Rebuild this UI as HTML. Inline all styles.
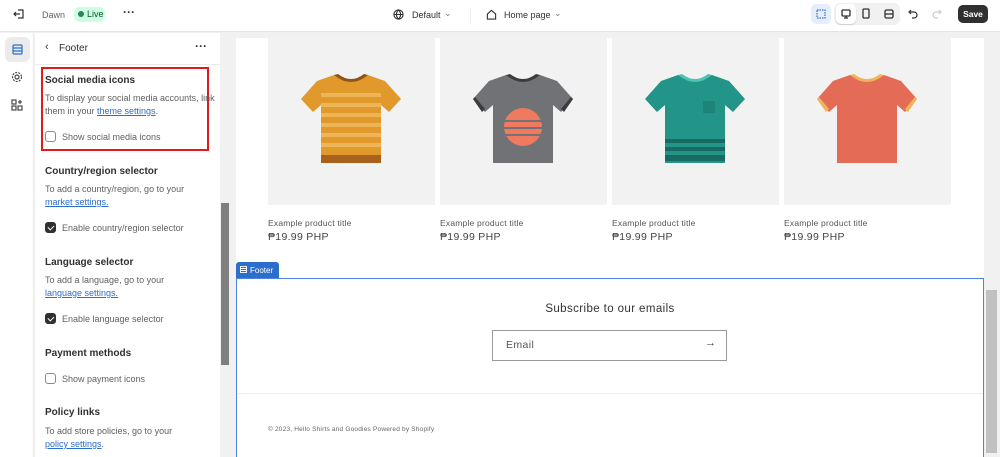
<!DOCTYPE html>
<html><head><meta charset="utf-8"><style>
*{margin:0;padding:0;box-sizing:border-box}
body{width:1000px;height:457px;overflow:hidden;font-family:"Liberation Sans",sans-serif;background:#f1f1f1;position:relative;color:#303030}
.a{position:absolute}
.t{font-size:9px;color:#616161;line-height:13px}
.h{font-size:10px;color:#303030;font-weight:bold;font-weight:600}
a{color:#2c6ecb;text-decoration:underline}
.cb{position:absolute;width:11px;height:11px;border:1px solid #8a8a8a;border-radius:3px;background:#fff}
.cb.on{background:#303030;border-color:#303030}
.cb.on::after{content:"";position:absolute;left:3px;top:1px;width:3px;height:5px;border:solid #fff;border-width:0 1.3px 1.3px 0;transform:rotate(45deg)}
.card{position:absolute;top:38px;width:167px;height:167px;background:#f2f2f2}
.ptl{position:absolute;top:218px;font-size:8.5px;color:#555;letter-spacing:.2px}
.pr{position:absolute;top:231px;font-size:10.5px;color:#444;letter-spacing:.3px}
</style></head><body>
<!-- top bar -->
<div class="a" style="left:0;top:0;width:1000px;height:32px;background:#fff;border-bottom:1px solid #e3e3e3"></div>
<svg class="a" style="left:13px;top:8px" width="12" height="12" viewBox="0 0 12 12" fill="none" stroke="#303030" stroke-width="1.2"><path d="M5 2h5v8H5M1 6h6M3 4L1 6l2 2"/></svg>
<div class="a t" style="left:42px;top:9px;font-size:9px">Dawn</div>
<div class="a" style="left:74px;top:7px;width:31px;height:15px;background:#cdfee1;border-radius:6px;font-size:9px;color:#0c5132;padding:2px 0 0 13px">Live</div>
<div class="a" style="left:78px;top:11px;width:6px;height:6px;border-radius:3px;background:#29845a"></div>
<div class="a" style="left:123px;top:5px;font-size:12px;font-weight:bold">···</div>
<svg class="a" style="left:393px;top:9px" width="11" height="11" viewBox="0 0 12 12" fill="none" stroke="#303030" stroke-width="1.2"><circle cx="6" cy="6" r="5"/><path d="M1 6h10M6 1c-3 3-3 7 0 10M6 1c3 3 3 7 0 10"/></svg>
<div class="a" style="left:412px;top:10px;font-size:9px">Default</div>
<div class="a" style="left:444px;top:8px;font-size:9px;color:#777">⌄</div>
<div class="a" style="left:470px;top:8px;width:1px;height:16px;background:#eee"></div>
<svg class="a" style="left:486px;top:9px" width="11" height="11" viewBox="0 0 12 12" fill="none" stroke="#303030" stroke-width="1.2"><path d="M1.5 5.5L6 1.5l4.5 4V11h-9z"/></svg>
<div class="a" style="left:504px;top:10px;font-size:9px">Home page</div>
<div class="a" style="left:554px;top:8px;font-size:9px;color:#777">⌄</div>
<div class="a" style="left:811px;top:4px;width:20px;height:20px;background:#e7eefb;border-radius:5px"></div>
<svg class="a" style="left:816px;top:9px" width="10" height="10" viewBox="0 0 10 10" fill="none" stroke="#2c6ecb" stroke-width="1.2" stroke-dasharray="1.5 1"><rect x="1" y="1" width="8" height="8"/></svg>
<div class="a" style="left:834px;top:3px;width:66px;height:22px;background:#f1f1f1;border-radius:6px"></div>
<div class="a" style="left:836px;top:4px;width:20px;height:20px;background:#fff;border-radius:5px;box-shadow:0 1px 1px rgba(0,0,0,.15)"></div>
<svg class="a" style="left:841px;top:9px" width="10" height="10" viewBox="0 0 10 10" fill="none" stroke="#303030" stroke-width="1.3"><rect x="1" y="1" width="8" height="6" rx="1"/><path d="M5 7v2M3 9h4"/></svg>
<svg class="a" style="left:862px;top:8px" width="8" height="11" viewBox="0 0 8 11" fill="none" stroke="#303030" stroke-width="1.3"><rect x="1" y="1" width="6" height="9" rx="1"/></svg>
<svg class="a" style="left:856px;top:8px" width="10" height="11" viewBox="0 0 10 11" fill="none" stroke="#303030" stroke-width="1.3" transform="translate(0,0)"></svg>
<svg class="a" style="left:884px;top:9px" width="10" height="10" viewBox="0 0 10 10" fill="none" stroke="#303030" stroke-width="1.3"><rect x="1" y="1" width="8" height="8" rx="1.5"/><path d="M1 5h8"/></svg>
<svg class="a" style="left:908px;top:9px" width="10" height="10" viewBox="0 0 10 10" fill="none" stroke="#303030" stroke-width="1.2"><path d="M3 1L1 3l2 2M1 3h5a3 3 0 010 6H4"/></svg>
<svg class="a" style="left:932px;top:9px" width="10" height="10" viewBox="0 0 10 10" fill="none" stroke="#ccc" stroke-width="1.2"><path d="M7 1l2 2-2 2M9 3H4a3 3 0 000 6h2"/></svg>
<div class="a" style="left:958px;top:5px;width:30px;height:18px;background:#303030;border-radius:5px;color:#fff;font-size:8.5px;font-weight:bold;text-align:center;line-height:18px">Save</div>
<!-- left rail -->
<div class="a" style="left:0;top:33px;width:34px;height:424px;background:#fff;border-right:1px solid #ebebeb"></div>
<div class="a" style="left:5px;top:37px;width:25px;height:25px;background:#ebebeb;border-radius:6px"></div>
<svg class="a" style="left:12px;top:44px" width="11" height="11" viewBox="0 0 11 11" fill="none" stroke="#2c6ecb" stroke-width="1.2"><rect x="1" y="1" width="9" height="9" rx="1"/><path d="M1 4h9M1 7h9"/></svg>
<svg class="a" style="left:11px;top:71px" width="12" height="12" viewBox="0 0 12 12" fill="none" stroke="#4a4a4a" stroke-width="1.2"><circle cx="6" cy="6" r="2"/><circle cx="6" cy="6" r="4.5" stroke-dasharray="2 1.2"/></svg>
<svg class="a" style="left:11px;top:99px" width="12" height="12" viewBox="0 0 12 12" fill="none" stroke="#4a4a4a" stroke-width="1.2"><rect x="1" y="1" width="4" height="4"/><rect x="1" y="7" width="4" height="4"/><rect x="7" y="7" width="4" height="4"/><path d="M9 1v4M7 3h4"/></svg>
<!-- panel -->
<div class="a" style="left:35px;top:33px;width:185px;height:424px;background:#fff"></div>
<div class="a" style="left:35px;top:64px;width:185px;height:1px;background:#ebebeb"></div>
<div class="a" style="left:45px;top:41px;font-size:11px">‹</div>
<div class="a" style="left:59px;top:43px;font-size:10px">Footer</div>
<div class="a" style="left:195px;top:39px;font-size:12px;font-weight:bold">···</div>
<div class="a" style="left:41px;top:67px;width:168px;height:84px;border:2px solid #e01b1b"></div>
<div class="a h" style="left:45px;top:75px">Social media icons</div>
<div class="a t" style="left:45px;top:92px;width:170px">To display your social media accounts, link them in your <a>theme settings</a>.</div>
<div class="cb" style="left:45px;top:131px"></div>
<div class="a t" style="left:62px;top:131px">Show social media icons</div>
<div class="a h" style="left:45px;top:166px">Country/region selector</div>
<div class="a t" style="left:45px;top:183px;width:170px">To add a country/region, go to your<br><a>market settings.</a></div>
<div class="cb on" style="left:45px;top:222px"></div>
<div class="a t" style="left:62px;top:222px">Enable country/region selector</div>
<div class="a h" style="left:45px;top:257px">Language selector</div>
<div class="a t" style="left:45px;top:274px;width:170px">To add a language, go to your<br><a>language settings.</a></div>
<div class="cb on" style="left:45px;top:313px"></div>
<div class="a t" style="left:62px;top:313px">Enable language selector</div>
<div class="a h" style="left:45px;top:348px">Payment methods</div>
<div class="cb" style="left:45px;top:373px"></div>
<div class="a t" style="left:62px;top:373px">Show payment icons</div>
<div class="a h" style="left:45px;top:407px">Policy links</div>
<div class="a t" style="left:45px;top:425px;width:170px">To add store policies, go to your<br><a>policy settings</a>.</div>
<!-- panel scrollbar -->
<div class="a" style="left:220px;top:33px;width:10px;height:424px;background:#f1f1f1"></div>
<div class="a" style="left:221px;top:203px;width:8px;height:162px;background:#7f7f7f"></div>
<!-- preview -->
<div class="a" style="left:236px;top:38px;width:748px;height:419px;background:#fff"></div>
<div class="a" style="left:984px;top:33px;width:16px;height:424px;background:#f1f1f1"></div>
<div class="a" style="left:986px;top:290px;width:11px;height:163px;background:#c1c1c1"></div>

<div class="card" style="left:268px"><svg style="position:absolute;left:33px;top:35px" width="100" height="92" viewBox="0 0 100 92"><path d="M33 2L16 8 0 26l12 13 8-7v58h60V32l8 7 12-13L84 8 67 2q-17 10-34 0z" fill="#e0992a"/><g fill="#ecb558"><rect x="20" y="20" width="60" height="4"/><rect x="20" y="30" width="60" height="4"/><rect x="20" y="40" width="60" height="4"/><rect x="20" y="50" width="60" height="4"/><rect x="20" y="60" width="60" height="4"/><rect x="20" y="70" width="60" height="4"/></g><rect x="20" y="82" width="60" height="8" fill="#a8621e"/><path d="M33 2q17 14 34 0l-4-1q-13 10-26 0z" fill="#8e5418"/></svg></div>
<div class="card" style="left:440px"><svg style="position:absolute;left:33px;top:35px" width="100" height="92" viewBox="0 0 100 92"><path d="M33 2L16 8 0 26l12 13 8-7v58h60V32l8 7 12-13L84 8 67 2q-17 10-34 0z" fill="#707276"/><path d="M2 24L12 36l-3 3L0 26zM98 24L88 36l3 3 9-13z" fill="#3b3b3b"/><path d="M33 2q17 14 34 0l-4-1q-13 10-26 0z" fill="#3b3b3b"/><circle cx="50" cy="54" r="19" fill="#ef7a5f"/><g fill="#707276"><rect x="30" y="47" width="40" height="2"/><rect x="30" y="54" width="40" height="2"/><rect x="30" y="61" width="40" height="2"/></g></svg></div>
<div class="card" style="left:612px"><svg style="position:absolute;left:33px;top:35px" width="100" height="92" viewBox="0 0 100 92"><path d="M33 2L16 8 0 26l12 13 8-7v58h60V32l8 7 12-13L84 8 67 2q-17 10-34 0z" fill="#229488"/><path d="M33 2q17 14 34 0l-4-1q-13 10-26 0z" fill="#4bc3b6"/><rect x="58" y="28" width="12" height="12" fill="#1e8378"/><g fill="#176b62"><rect x="20" y="66" width="60" height="4"/><rect x="20" y="74" width="60" height="4"/><rect x="20" y="82" width="60" height="6"/></g></svg></div>
<div class="card" style="left:784px"><svg style="position:absolute;left:33px;top:35px" width="100" height="92" viewBox="0 0 100 92"><path d="M33 2L16 8 0 26l12 13 8-7v58h60V32l8 7 12-13L84 8 67 2q-17 10-34 0z" fill="#e46b55"/><path d="M33 2q17 14 34 0l-4-1q-13 10-26 0z" fill="#f0b55a"/><path d="M2 24L12 36l-3 3L0 26zM98 24L88 36l3 3 9-13z" fill="#f0b55a"/></svg></div>
<div class="ptl" style="left:268px">Example product title</div><div class="pr" style="left:268px">₱19.99 PHP</div>
<div class="ptl" style="left:440px">Example product title</div><div class="pr" style="left:440px">₱19.99 PHP</div>
<div class="ptl" style="left:612px">Example product title</div><div class="pr" style="left:612px">₱19.99 PHP</div>
<div class="ptl" style="left:784px">Example product title</div><div class="pr" style="left:784px">₱19.99 PHP</div>

<!-- footer -->
<div class="a" style="left:236px;top:262px;width:43px;height:16px;background:#2c6ecb;border-radius:3px 3px 0 0;color:#fff;font-size:8px;padding:4px 0 0 14px">Footer</div>
<svg class="a" style="left:240px;top:266px" width="7" height="7" viewBox="0 0 7 7" fill="none" stroke="#fff" stroke-width=".9"><rect x=".5" y=".5" width="6" height="6"/><path d="M.5 2.5h6M.5 4.5h6"/></svg>
<div class="a" style="left:236px;top:278px;width:748px;height:179px;border:1.5px solid #4a86e0;border-bottom:none"></div>
<div class="a" style="left:236px;top:303px;width:748px;text-align:center;font-size:11.5px;color:#333;letter-spacing:.4px">Subscribe to our emails</div>
<div class="a" style="left:492px;top:330px;width:235px;height:31px;border:1px solid #999"></div>
<div class="a" style="left:506px;top:339px;font-size:10.5px;color:#555;letter-spacing:.4px">Email</div>
<div class="a" style="left:705px;top:337px;font-size:11px;color:#333">→</div>
<div class="a" style="left:237px;top:393px;width:746px;height:1px;background:#eee"></div>
<div class="a" style="left:268px;top:426px;font-size:6.5px;color:#666;letter-spacing:.2px">© 2023, Hello Shirts and Goodies Powered by Shopify</div>
</body></html>
